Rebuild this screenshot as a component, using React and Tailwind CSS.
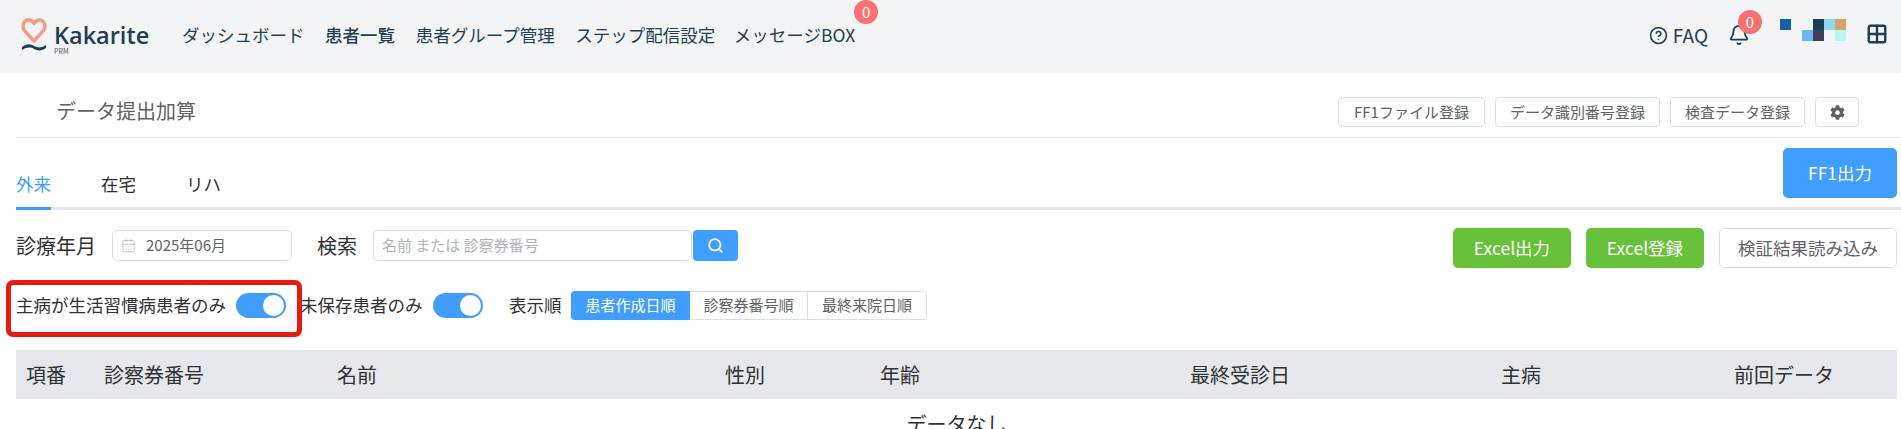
import { Bell, CircleHelp, Grid2x2, CalendarDays, Search } from 'lucide-react';
import { FaCog } from 'react-icons/fa';

const navItems = ['ダッシュボード', '患者一覧', '患者グループ管理', 'ステップ配信設定'];

const pixels = [
  'bg-[#1a5ea8]', '', '', 'bg-[#1a3f55]', 'bg-[#8cd8f5]', 'bg-[#d8a26e]',
  '', '', 'bg-[#68b8f5]', 'bg-[#3f3f57]', '', 'bg-[#b6f5f5]',
];

const columns = [
  { label: '項番', width: 'w-[78px]' },
  { label: '診察券番号', width: 'w-[233px]' },
  { label: '名前', width: 'w-[388px]' },
  { label: '性別', width: 'w-[155px]' },
  { label: '年齢', width: 'w-[310px]' },
  { label: '最終受診日', width: 'w-[311px]' },
  { label: '主病', width: 'w-[233px]' },
  { label: '前回データ', width: 'w-[163px]' },
];

function Badge({ className }) {
  return (
    <span className={`absolute flex h-[24px] w-[24px] items-center justify-center rounded-full bg-[#fb7070] text-[15px] text-white ${className}`}>
      0
    </span>
  );
}

function Toggle() {
  return (
    <span className="flex h-[25px] w-[50px] shrink-0 items-center justify-end rounded-full bg-[#409eff] pr-[2px]">
      <span className="h-[21px] w-[21px] rounded-full bg-white" />
    </span>
  );
}

function OutlineButton({ children, className = '' }) {
  return (
    <button className={`flex h-[30px] items-center justify-center rounded-[4px] border border-[#dcdfe6] bg-white text-[15px] text-[#606266] ${className}`}>
      {children}
    </button>
  );
}

export default function App() {
  return (
    <div
      className="h-[429px] w-[1901px] overflow-hidden bg-white text-[17.5px] text-[#303133]"
      style={{ fontFamily: '"Noto Sans CJK JP", "Noto Sans", sans-serif' }}
    >
      <header className="flex h-[73px] items-start bg-[#f2f4f6] pl-[21px] pr-[13px] pt-[17px] text-[#1e3f55]">
        <div className="flex w-[161px] shrink-0 items-center">
          <svg width="26" height="40" viewBox="0 0 26 40" fill="none" className="mr-[7px]">
            <path d="M13 24 L3.6 13.6 C0.4 9.6 2.4 3 7.6 3 C10 3 12 4.4 13 6.6 C14 4.4 16 3 18.4 3 C23.6 3 25.6 9.6 22.4 13.6 Z" stroke="#f79a85" strokeWidth="3.4" strokeLinejoin="round" />
            <path d="M1 30 C6 26 10 27 13 29 C17 31 21 31 25 28 L25 31 C21 34 17 34 13 32 C10 30 6 30 1 33 Z" fill="#1b3f55" />
          </svg>
          <div className="mt-[3px] flex flex-col">
            <span className="text-[23.5px] leading-[24px] font-semibold" style={{ fontFamily: '"Open Sans", sans-serif' }}>Kakarite</span>
            <span className="text-[7px] leading-[8px] text-[#3f5a6b]">PRM</span>
          </div>
        </div>
        <nav className="flex items-center gap-[20.6px] pt-[5px]">
          {navItems.map((item) => (
            <span key={item} className={item === '患者一覧' ? 'font-medium' : ''}>{item}</span>
          ))}
          <span className="relative -ml-[2px]">
            メッセージBOX
            <Badge className="-top-[22px] -right-[23px]" />
          </span>
        </nav>
        <div className="ml-auto flex items-center pt-[3px]">
          <CircleHelp size={19} strokeWidth={2} />
          <span className="ml-[5px] text-[19px] leading-[30px]">FAQ</span>
          <span className="relative ml-[20px]">
            <Bell size={22} strokeWidth={2} />
            <Badge className="-top-[14px] -right-[12px]" />
          </span>
          <div className="ml-[30px] -mt-[10px] grid grid-cols-[repeat(6,11px)] grid-rows-[repeat(2,11px)]">
            {pixels.map((color, i) => (
              <span key={i} className={color} />
            ))}
          </div>
          <Grid2x2 size={22} strokeWidth={2.6} className="ml-[20px] -mt-[2px]" />
        </div>
      </header>

      <div className="ml-[16px] flex h-[65px] items-end justify-between border-b border-[#e4e7ed] pb-[10px] pl-[40px] pr-[42px]">
        <h1 className="mb-[1px] text-[20px] font-normal leading-[30px] text-[#606266]">データ提出加算</h1>
        <div className="flex items-center gap-[10px]">
          <OutlineButton className="w-[147px]">FF1ファイル登録</OutlineButton>
          <OutlineButton className="w-[165px]">データ識別番号登録</OutlineButton>
          <OutlineButton className="w-[135px]">検査データ登録</OutlineButton>
          <OutlineButton className="w-[44px]">
            <FaCog size={15} className="text-[#606266]" />
          </OutlineButton>
        </div>
      </div>

      <div className="ml-[16px] flex h-[72px] items-end justify-between border-b-[3px] border-[#e4e7ed] pr-[4px]">
        <div className="flex gap-[50px]">
          <span className="-mb-[3px] flex h-[49px] items-center border-b-[3px] border-[#409eff] text-[#409eff]">外来</span>
          <span className="flex h-[46px] items-center">在宅</span>
          <span className="flex h-[46px] items-center">リハ</span>
        </div>
        <button className="mb-[9px] h-[50px] w-[114px] rounded-[5px] bg-[#409eff] text-white">FF1出力</button>
      </div>

      <div className="mt-[18px] flex items-start justify-between pl-[16px] pr-[4px]">
        <div className="mt-[2px] flex items-center">
          <span className="w-[96px] text-[20px]">診療年月</span>
          <div className="flex h-[31px] w-[180px] items-center rounded-[5px] border border-[#dcdfe6] pl-[8px] text-[15px] text-[#606266]">
            <CalendarDays size={15} strokeWidth={1.5} className="mr-[10px] text-[#c0c4cc]" />
            2025年06月
          </div>
          <span className="ml-[25px] w-[56px] text-[20px]">検索</span>
          <div className="flex h-[31px] w-[319px] items-center rounded-[5px] border border-[#dcdfe6] pl-[8px] text-[15px] text-[#b0b3ba]">
            名前 または 診察券番号
          </div>
          <button className="ml-[1px] flex h-[31px] w-[45px] items-center justify-center rounded-[4px] bg-[#409eff] text-white">
            <Search size={17} strokeWidth={2.5} />
          </button>
        </div>
        <div className="flex items-center gap-[15px] text-[17.5px]">
          <button className="h-[40px] w-[118px] rounded-[5px] bg-[#67c23a] text-white">Excel出力</button>
          <button className="h-[40px] w-[118px] rounded-[5px] bg-[#67c23a] text-white">Excel登録</button>
          <button className="h-[40px] w-[178px] rounded-[5px] border border-[#dcdfe6] text-[#606266]">検証結果読み込み</button>
        </div>
      </div>

      <div className="mt-[9px] flex h-[57px] items-center pl-[16px]">
        <div className="relative flex items-center">
          <span className="absolute -top-[12px] -left-[10px] h-[57px] w-[296px] rounded-[7px] border-[5px] border-[#e8190f]" />
          <span className="w-[220px]">主病が生活習慣病患者のみ</span>
          <Toggle />
        </div>
        <span className="ml-[14px] w-[133px]">未保存患者のみ</span>
        <Toggle />
        <span className="ml-[26px] w-[62px]">表示順</span>
        <div className="flex h-[29px] text-[15px]">
          <span className="flex w-[119px] items-center justify-center rounded-l-[4px] bg-[#409eff] text-white">患者作成日順</span>
          <span className="flex w-[118px] items-center justify-center border-y border-r border-[#dcdfe6] text-[#606266]">診察券番号順</span>
          <span className="flex w-[119px] items-center justify-center rounded-r-[4px] border-y border-r border-[#dcdfe6] text-[#606266]">最終来院日順</span>
        </div>
      </div>

      <div className="mt-[16px] ml-[16px] mr-[4px]">
        <div className="flex h-[49px] items-center bg-[#e5e7eb] pl-[10px] text-[20px]">
          {columns.map((col) => (
            <span key={col.label} className={`shrink-0 ${col.width}`}>{col.label}</span>
          ))}
        </div>
        <p className="mt-[10px] text-center text-[20px]">データなし</p>
      </div>
    </div>
  );
}
